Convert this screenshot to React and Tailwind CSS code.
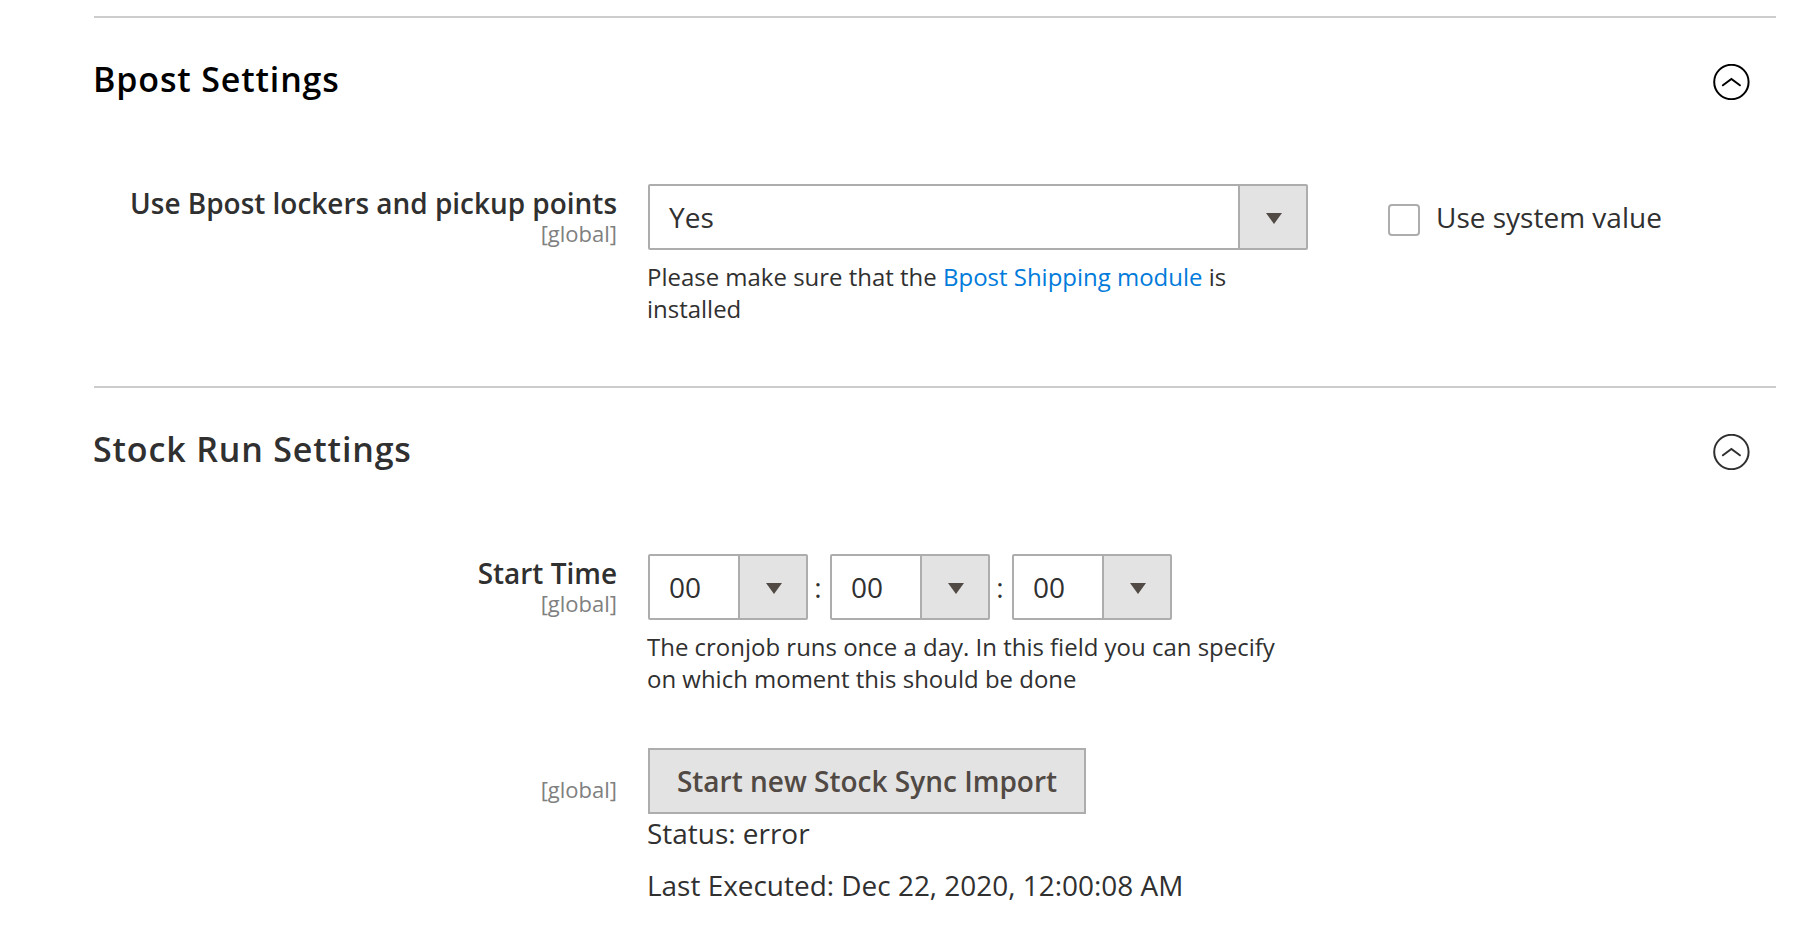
function Chevron({ color }) {
  return (
    <svg className={`mr-[26px] mt-[13px] h-9 w-[37px] shrink-0 ${color}`} viewBox="0 0 37 36" fill="none" stroke="currentColor" strokeWidth="2">
      <circle cx="18.4" cy="18" r="17.2" />
      <path d="M9.9 21.300L18.4 15L26.900 21.300" strokeLinecap="round" />
    </svg>
  );
}

function Section({ title, color, children, height }) {
  return (
    <section className={`border-t-2 border-[#ccc] ${height}`}>
      <header className="flex h-[166px] justify-between pt-[33px]">
        <h2 className={`-ml-px text-[34px] leading-[56px] font-semibold tracking-[0.85px] ${color}`}>{title}</h2>
        <Chevron color={color} />
      </header>
      {children}
    </section>
  );
}

function Label({ text, className = "" }) {
  return (
    <div className={`mr-[31px] w-[523px] shrink-0 text-right ${className}`}>
      {text && <div className="text-[27.95px] leading-[38px] font-semibold">{text}</div>}
      <div className="-mt-px text-[22px] leading-6 text-[#808080]">[global]</div>
    </div>
  );
}

function Select({ value, className }) {
  return (
    <div className={`flex h-[66px] rounded-[2px] border-2 border-[#adadad] ${className}`}>
      <span className="flex-1 pl-[19px] text-[28px] leading-[62px]">{value}</span>
      <span className="flex w-[68px] items-center justify-center border-l-2 border-[#adadad] bg-[#e3e3e3] pt-[3px] pl-0.5">
        <svg className="h-[11px] w-4" viewBox="0 0 16 11"><path d="M0 0H16L8 11Z" fill="#514943" /></svg>
      </span>
    </div>
  );
}

export default function App() {
  return (
    <main className="h-[934px] w-[1816px] overflow-hidden bg-white pt-4 pr-10 pl-[94px] font-['Open_Sans',sans-serif] text-[#303030]">
      <Section title="Bpost Settings" color="text-black" height="h-[370px]">
        <div className="flex">
          <Label text="Use Bpost lockers and pickup points" />
          <div className="w-[660px]">
            <Select value="Yes" className="w-[660px]" />
            <p className="-ml-px mt-[11px] text-[23.97px] leading-8">
              Please make sure that the <a className="text-[#007bdb]">Bpost Shipping module</a> is<br />installed
            </p>
          </div>
          <label className="ml-20 flex h-[66px] items-center">
            <span className="mt-1.5 mr-4 size-8 rounded-[4px] border-2 border-[#adadad]" />
            <span className="text-[28px]">Use system value</span>
          </label>
        </div>
      </Section>
      <Section title="Stock Run Settings" color="text-[#303030]" height="h-[550px]">
        <div className="flex">
          <Label text="Start Time" />
          <div>
            <div className="flex text-[28px] leading-[66px]">
              <Select value="00" className="w-40" />
              <span className="w-[22px] pr-0.5 text-center">:</span>
              <Select value="00" className="w-40" />
              <span className="w-[22px] pr-0.5 text-center">:</span>
              <Select value="00" className="w-40" />
            </div>
            <p className="-ml-px mt-[11px] text-[23.97px] leading-8">
              The cronjob runs once a day. In this field you can specify<br />on which moment this should be done
            </p>
          </div>
        </div>
        <div className="mt-[53px] flex">
          <Label className="pt-[30px]" />
          <div className="text-[28px]">
            <button className="block h-[66px] w-[438px] border-2 border-[#adadad] bg-[#e3e3e3] font-semibold text-[#514943]">
              Start new Stock Sync Import
            </button>
            <div className="-mt-px -ml-px text-[27.95px] leading-10">
              <p>Status: error</p>
              <p className="mt-3">Last Executed: Dec 22, 2020, 12:00:08 AM</p>
            </div>
          </div>
        </div>
      </Section>
    </main>
  );
}
